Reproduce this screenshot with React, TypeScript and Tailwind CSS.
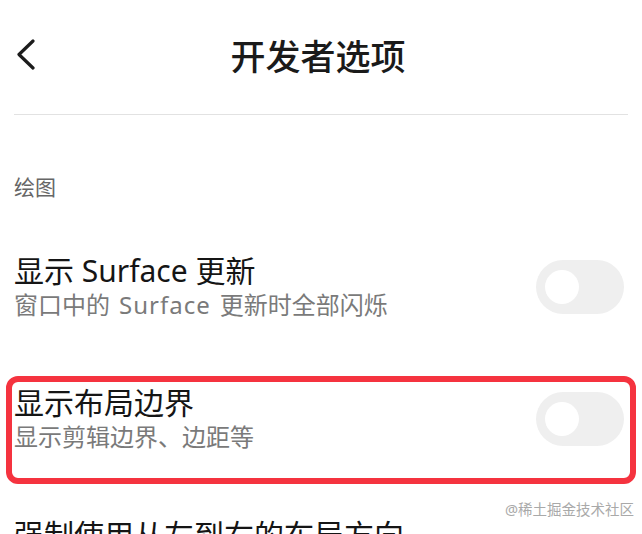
import React from "react";

const FONT = "font-['Noto_Sans','Noto_Sans_CJK_SC',sans-serif]";

function Toggle() {
  return (
    <span className="flex h-[54px] w-[88px] shrink-0 items-center rounded-full bg-[#efefef] pl-[9px]">
      <span className="h-[34px] w-[34px] rounded-full bg-white" />
    </span>
  );
}

function Row({
  title,
  subtitle,
  marked,
}: {
  title: string;
  subtitle?: React.ReactNode;
  marked?: boolean;
}) {
  return (
    <div className="relative flex items-center justify-between py-8 pl-[14px] pr-[18px]">
      {marked && (
        <span className="pointer-events-none absolute bottom-[1px] left-[6px] right-[6px] top-[23px] rounded-[12px] border-[6px] border-[#f5333f]" />
      )}
      <div className="flex flex-col">
        <span className="whitespace-nowrap text-[30px] leading-[36px] text-[#151515]">
          {title}
        </span>
        {subtitle && (
          <span className="whitespace-nowrap text-[24px] leading-[32px] text-[#7a7a7a]">
            {subtitle}
          </span>
        )}
      </div>
      {subtitle && <Toggle />}
    </div>
  );
}

export default function App() {
  return (
    <div className={`relative h-[534px] w-full overflow-hidden bg-white ${FONT}`}>
      <header className="relative flex h-[114px] items-center justify-center pr-[6px]">
        <svg
          className="absolute left-[15px] top-[38px]"
          width="24"
          height="32"
          viewBox="0 0 24 32"
          fill="none"
        >
          <polyline
            points="18,3 4,16.5 18,30"
            stroke="#1c1c1c"
            strokeWidth="3.2"
            strokeLinecap="round"
            strokeLinejoin="round"
          />
        </svg>
        <h1 className="-mt-[2px] text-[35px] font-medium leading-none text-[#1a1a1a]">
          开发者选项
        </h1>
      </header>
      <div className="mx-[14px] h-px bg-[#e2e2e2]" />

      <div className="pl-[14px] pt-[58px] text-[21px] leading-[28px] text-[#666]">
        绘图
      </div>

      <div className="mt-[20px]">
        <Row
          title="显示 Surface 更新"
          subtitle={
            <>
              窗口中的<span className="mx-[9px] tracking-[1px]">Surface</span>更新时全部闪烁
            </>
          }
        />
        <Row title="显示布局边界" subtitle="显示剪辑边界、边距等" marked />
        <Row title="强制使用从左到右的布局方向" />
      </div>

      <span className="absolute right-[8px] top-[499px] text-[14.5px] leading-[20px] text-[#a9a9a9]">
        @稀土掘金技术社区
      </span>
    </div>
  );
}
